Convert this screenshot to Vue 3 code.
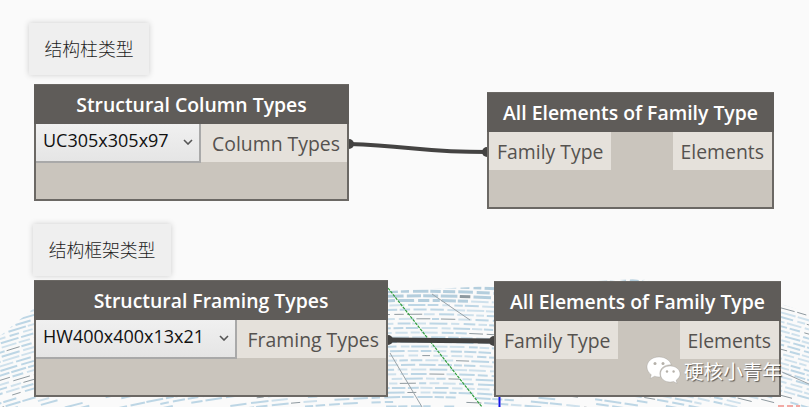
<template>
  <div class="canvas">
    <!-- background model -->
    <svg class="model" width="809" height="407" viewBox="0 0 809 407">
      <defs>
        <clipPath id="modelClip">
          <polygon points="0,336 34,308 120,292 388,291 640,279 781,304 809,313 809,407 0,407" />
        </clipPath>
      </defs>
      <g clip-path="url(#modelClip)">
        <line
          v-for="(b, i) in bricks"
          :key="i"
          :x1="b.x1"
          :y1="b.y1"
          :x2="b.x2"
          :y2="b.y2"
          :stroke="b.color"
          :stroke-width="b.w"
        />
        <line class="beam" x1="432" y1="294" x2="470" y2="320" />
        <line class="beam" x1="390" y1="353" x2="422" y2="407" />
        <line class="beam" x1="782" y1="372" x2="809" y2="384" />
      </g>
      <line class="green" x1="388" y1="288" x2="482" y2="407" />
      <line class="blue" x1="499.5" y1="395" x2="499.5" y2="407" />
      <line class="red" x1="778" y1="406" x2="800" y2="406" />
      <!-- wires -->
      <path class="wire" d="M349 144 C 410 146, 425 152, 487 152" />
      <path class="wire wire-thick" d="M388 340 L 494 341" />
      <circle class="port" cx="349" cy="144" r="5" />
      <circle class="port" cx="487" cy="152" r="5" />
      <circle class="port" cx="388" cy="340" r="5" />
      <circle class="port" cx="494" cy="341" r="5" />
    </svg>

    <div class="note note-column">结构柱类型</div>
    <div class="note note-framing">结构框架类型</div>

    <div
      v-for="n in nodes"
      :key="n.id"
      class="node"
      :class="n.id"
    >
      <div class="node-title">{{ n.title }}</div>
      <div class="node-row">
        <div v-if="n.option" class="select-wrap">
          <select class="select">
            <option>{{ n.option }}</option>
          </select>
          <svg class="chevron" width="10" height="6" viewBox="0 0 10 6">
            <path d="M1 1 L5 5 L9 1" />
          </svg>
        </div>
        <div v-if="n.input" class="node-port">{{ n.input }}</div>
        <div v-if="n.input" class="spacer"></div>
        <div class="node-port" :class="{ 'port-out': n.option }">{{ n.output }}</div>
      </div>
    </div>

    <!-- watermark -->
    <div class="watermark">
      <svg width="35" height="30" viewBox="0 0 35 30">
        <path class="bubble" d="M13 1 C5.8 1 1 5.6 1 11 C1 14.2 2.7 16.8 5.3 18.7 L4.2 22.4 L8.6 20.2 C10 20.6 11.4 20.9 13 20.9 L14.5 20.8 C14 19.6 13.8 18.5 13.8 17.4 C13.8 12.5 18.4 8.7 24.2 8.7 L25.2 8.7 C23.8 4.2 18.9 1 13 1 Z" />
        <circle class="eye" cx="9" cy="7.5" r="1.5" />
        <circle class="eye" cx="17" cy="7.5" r="1.5" />
        <path class="bubble" d="M34 18 C34 13.2 29.4 10 24.2 10 C18.6 10 14.6 13.4 14.6 18 C14.6 22.6 18.6 26 24.2 26 C25.4 26 26.5 25.8 27.6 25.5 L31 27.4 L30.1 24.2 C32.5 22.5 34 20.4 34 18 Z" />
        <circle class="eye" cx="21" cy="15.5" r="1.2" />
        <circle class="eye" cx="27.6" cy="15.5" r="1.2" />
      </svg>
      <span>硬核小青年</span>
    </div>
  </div>
</template>

<script setup>
const nodes = [
  { id: "n-column", title: "Structural Column Types", option: "UC305x305x97", output: "Column Types" },
  { id: "n-family1", title: "All Elements of Family Type", input: "Family Type", output: "Elements" },
  { id: "n-framing", title: "Structural Framing Types", option: "HW400x400x13x21", output: "Framing Types" },
  { id: "n-family2", title: "All Elements of Family Type", input: "Family Type", output: "Elements" },
]

// rows of pale slabs, fanning out from the middle like the building model
let seed = 7
const rnd = () => {
  seed = (seed * 16807) % 2147483647
  return seed / 2147483647
}

const curve = (x) => ((x - 420) * (x - 420) * 0.3) / 800

const bricks = []
for (let y = 190; y < 420; y += 4.6) {
  let x = -30 + rnd() * 20
  while (x < 830) {
    const len = 7 + rnd() * 11
    const y1 = y + curve(x)
    const top = y1 < 301
    const bottom = y1 > 396
    const dark = rnd() < 0.08
    const r = rnd()
    if (!bottom || r < 0.6) {
      bricks.push({
        x1: x.toFixed(1),
        y1: y1.toFixed(1),
        x2: (x + len).toFixed(1),
        y2: (y + curve(x + len)).toFixed(1),
        color: dark ? "#8e999f" : top ? "#b4cedd" : r < 0.55 ? "#bdd6e5" : "#cfe1ec",
        w: top ? 3 : dark ? 1 : 2,
      })
    }
    x += len + 1.5 + rnd() * 3
  }
}
</script>

<style>
html,
body {
  margin: 0;
  background: #fafafa;
}
</style>

<style scoped>
.canvas {
  position: relative;
  width: 809px;
  height: 407px;
  overflow: hidden;
  background: #fafafa;
  font-family: "Open Sans", "Noto Sans CJK SC", sans-serif;
}

.model {
  position: absolute;
  left: 0;
  top: 0;
}

.beam {
  stroke: #9aa3a8;
  stroke-width: 1;
}

.green {
  stroke: #2f9e3c;
  stroke-width: 1.2;
  stroke-dasharray: 3 1;
}

.blue {
  stroke: #1414e6;
  stroke-width: 2;
}

.red {
  stroke: #f2a9a4;
  stroke-width: 2;
  stroke-dasharray: 6 3;
}

.wire {
  fill: none;
  stroke: #444342;
  stroke-width: 4;
}

.wire-thick {
  stroke-width: 5;
}

.port {
  fill: #444342;
}

.note {
  position: absolute;
  box-sizing: border-box;
  height: 52px;
  padding-bottom: 3px;
  display: flex;
  align-items: center;
  justify-content: center;
  background: #efefef;
  box-shadow: 0 0 6px rgba(0, 0, 0, 0.18);
  color: #1c1c1c;
  font-family: "Noto Sans CJK SC", sans-serif;
  font-size: 17.8px;
  font-weight: 300;
}

.note-column {
  left: 29px;
  top: 23px;
  width: 120px;
}

.note-framing {
  left: 33px;
  top: 224px;
  width: 138px;
}

.node {
  position: absolute;
  box-sizing: border-box;
  height: 117px;
  background: #cac5bd;
  border: 1px solid #6b6864;
  border-width: 1px 2px 2px;
}

.n-column {
  left: 34px;
  top: 84px;
  width: 315px;
}

.n-family1 {
  left: 487px;
  top: 92px;
  width: 287px;
}

.n-framing {
  left: 34px;
  top: 280px;
  width: 354px;
}

.n-family2 {
  left: 494px;
  top: 281px;
  width: 287px;
  height: 116px;
}

.node-title {
  height: 39px;
  margin: 0 -2px;
  background: #5f5c59;
  color: #fff;
  font-size: 19.4px;
  font-weight: 600;
  line-height: 40px;
  text-align: center;
  white-space: nowrap;
}

.node-row {
  display: flex;
  height: 38px;
}

.spacer {
  flex: 1;
}

.select-wrap {
  position: relative;
  flex: 1;
  min-width: 0;
}

.select {
  box-sizing: border-box;
  display: block;
  width: 100%;
  height: 39px;
  margin: 0;
  padding: 0 0 5px 7px;
  appearance: none;
  border: 0;
  border-right: 2px solid #a9a9a9;
  border-bottom: 2px solid #a9a9a9;
  border-radius: 0;
  background: linear-gradient(#f0f0f0, #e5e5e5);
  color: #111;
  font-family: "Open Sans", sans-serif;
  font-size: 18px;
}

.chevron {
  position: absolute;
  right: 8px;
  top: 15px;
}

.chevron path {
  fill: none;
  stroke: #555;
  stroke-width: 1.6;
}

.node-port {
  display: flex;
  align-items: center;
  padding: 0 8px 0 8px;
  background: #e5e1db;
  color: #55524f;
  font-size: 19.4px;
  white-space: nowrap;
}

.port-out {
  flex: none;
  padding: 0 7px 0 11px;
}

.watermark {
  position: absolute;
  left: 646px;
  top: 356px;
  display: flex;
  align-items: center;
  gap: 3px;
  color: #fff;
  font-family: "Noto Sans CJK SC", sans-serif;
  font-size: 19.6px;
  line-height: 30px;
  text-shadow: 1px 1px 1px rgba(0, 0, 0, 0.55);
}

.bubble {
  fill: #fff;
  stroke: rgba(90, 90, 90, 0.3);
  stroke-width: 0.6;
}

.eye {
  fill: #b5b1aa;
}
</style>
